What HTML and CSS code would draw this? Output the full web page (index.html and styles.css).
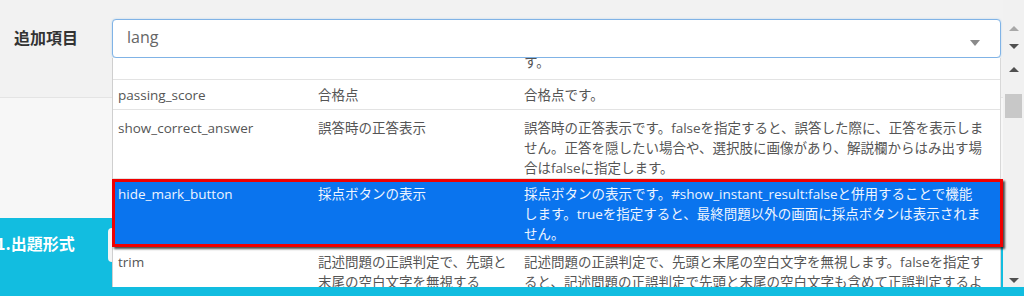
FILE: index.html
```html
<!DOCTYPE html>
<html lang="ja">
<head>
<meta charset="utf-8">
<title>追加項目</title>
<link rel="stylesheet" href="styles.css">
</head>
<body>
<div class="page">
  <div class="viewport">
    <div class="main">
      <div class="top">
        <div class="field">
          <div class="label">追加項目</div>
          <div class="select">
            <span class="select-value">lang</span>
            <span class="caret"></span>
          </div>
        </div>
      </div>
      <div class="mid"></div>
      <div class="band">
        <div class="band-title">1.出題形式</div>
        <div class="band-tab"></div>
      </div>
      <div class="dropdown">
        <div class="row row-cut">
          <span class="cell"></span>
          <span class="cell"></span>
          <span class="cell cut-text">す。</span>
        </div>
        <div class="row">
          <span class="cell">passing_score</span>
          <span class="cell">合格点</span>
          <span class="cell">合格点です。</span>
        </div>
        <div class="row row-multi">
          <span class="cell">show_correct_answer</span>
          <span class="cell">誤答時の正答表示</span>
          <span class="cell">誤答時の正答表示です。falseを指定すると、誤答した際に、正答を表示しま<br>せん。正答を隠したい場合や、選択肢に画像があり、解説欄からはみ出す場<br>合はfalseに指定します。</span>
        </div>
        <div class="row row-selected">
          <span class="cell">hide_mark_button</span>
          <span class="cell">採点ボタンの表示</span>
          <span class="cell">採点ボタンの表示です。#show_instant_result:falseと併用することで機能<br>します。trueを指定すると、最終問題以外の画面に採点ボタンは表示されま<br>せん。</span>
        </div>
        <div class="row row-last">
          <span class="cell">trim</span>
          <span class="cell">記述問題の正誤判定で、先頭と<br>末尾の空白文字を無視する</span>
          <span class="cell">記述問題の正誤判定で、先頭と末尾の空白文字を無視します。falseを指定す<br>ると、記述問題の正誤判定で先頭と末尾の空白文字も含めて正誤判定するよ</span>
        </div>
      </div>
    </div>
    <div class="scrollbar">
      <span class="sb-up sb-light"></span>
      <span class="sb-down sb-first"></span>
      <span class="sb-up sb-second"></span>
      <span class="sb-thumb"></span>
      <span class="sb-down sb-last"></span>
    </div>
  </div>
  <div class="strip"></div>
</div>
</body>
</html>
```

FILE: styles.css
```css
* { box-sizing: border-box; }

body {
  margin: 0;
  width: 1024px;
  height: 296px;
  overflow: hidden;
  background: #f2f2f2;
  color: #555;
  font-family: "Open Sans", "Noto Sans CJK JP", sans-serif;
}

.page {
  display: flex;
  flex-direction: column;
  height: 296px;
}

.viewport {
  display: flex;
  height: 287px;
}

.main {
  flex: 1;
  position: relative;
  display: flex;
  flex-direction: column;
}

.top {
  height: 98px;
  background: #f2f2f2;
  border-bottom: 1px solid #e4e4e4;
}

.field {
  display: flex;
  align-items: center;
  padding-top: 19px;
}

.label {
  width: 112px;
  padding-left: 14px;
  margin-top: -3px;
  font-family: "Noto Sans CJK JP", sans-serif;
  font-weight: 700;
  font-size: 16px;
  color: #333;
}

.select {
  width: 889px;
  height: 39px;
  background: #fff;
  border: 1px solid #80b3e6;
  border-radius: 4px;
  box-shadow: 0 0 2px rgba(102, 175, 233, 0.45);
  display: flex;
  align-items: center;
  justify-content: space-between;
  padding: 0 20px 0 14px;
  font-size: 16px;
  color: #666;
}

.select-value {
  margin-top: -3px;
}

.caret {
  width: 0;
  height: 0;
  border-left: 5px solid transparent;
  border-right: 5px solid transparent;
  border-top: 6px solid #8a8a8a;
  margin-top: 8px;
}

.mid {
  height: 120px;
  background: #f7f7f7;
}

.band {
  flex: 1;
  background: #12bde0;
  display: flex;
  align-items: flex-start;
}

.band-title {
  width: 108px;
  margin-top: 13px;
  text-indent: -4px;
  font-family: "Noto Sans CJK JP", sans-serif;
  font-size: 16px;
  font-weight: 700;
  line-height: 24px;
  color: #fff;
  white-space: nowrap;
}

.band-tab {
  width: 16px;
  height: 34px;
  margin-top: 10px;
  background: #f4f4f4;
  border-radius: 4px;
}

.dropdown {
  position: absolute;
  left: 112px;
  top: 58px;
  width: 889px;
  bottom: 0;
  background: #fff;
  border-left: 1px solid #cfcfcf;
  border-right: 1px solid #d8d8d8;
  font-size: 13.5px;
  line-height: 20px;
}

.row {
  display: grid;
  grid-template-columns: 200px 206px 1fr;
  padding: 5px 0 4px;
  border-bottom: 1px solid #e3e3e3;
  white-space: nowrap;
}

.cell {
  padding: 0 5px;
}

.row-cut {
  height: 22px;
  padding: 0;
  overflow: hidden;
}

.cut-text {
  margin-top: -6px;
}

.row-multi {
  padding: 8px 0 0;
}

.row-selected {
  position: relative;
  margin: 0 -3px 0 -1px;
  padding: 5px 3px 3px 1px;
  background: #0a74ee;
  color: #eef5ff;
  border-bottom: none;
  box-shadow: inset 0 0 0 3px #f00000, 2px 2px 2px rgba(0, 0, 0, 0.7);
}

.row-last {
  border-bottom: none;
}

.scrollbar {
  width: 21px;
  background: #f1f1f1;
  display: flex;
  flex-direction: column;
  align-items: center;
}

.sb-up,
.sb-down {
  width: 0;
  height: 0;
  border-left: 5px solid transparent;
  border-right: 5px solid transparent;
}

.sb-up { border-bottom: 5px solid #505050; }
.sb-down { border-top: 5px solid #505050; }

.sb-light {
  margin-top: 26px;
  border-bottom-color: #a8a8a8;
}

.sb-first { margin-top: 13px; }
.sb-second { margin-top: 18px; }

.sb-thumb {
  width: 17px;
  height: 24px;
  margin-top: 22px;
  background: #c8c8c8;
}

.sb-last {
  margin-top: auto;
  margin-bottom: 4px;
}

.strip {
  position: relative;
  z-index: 2;
  height: 9px;
  background: #12bde0;
}
```
